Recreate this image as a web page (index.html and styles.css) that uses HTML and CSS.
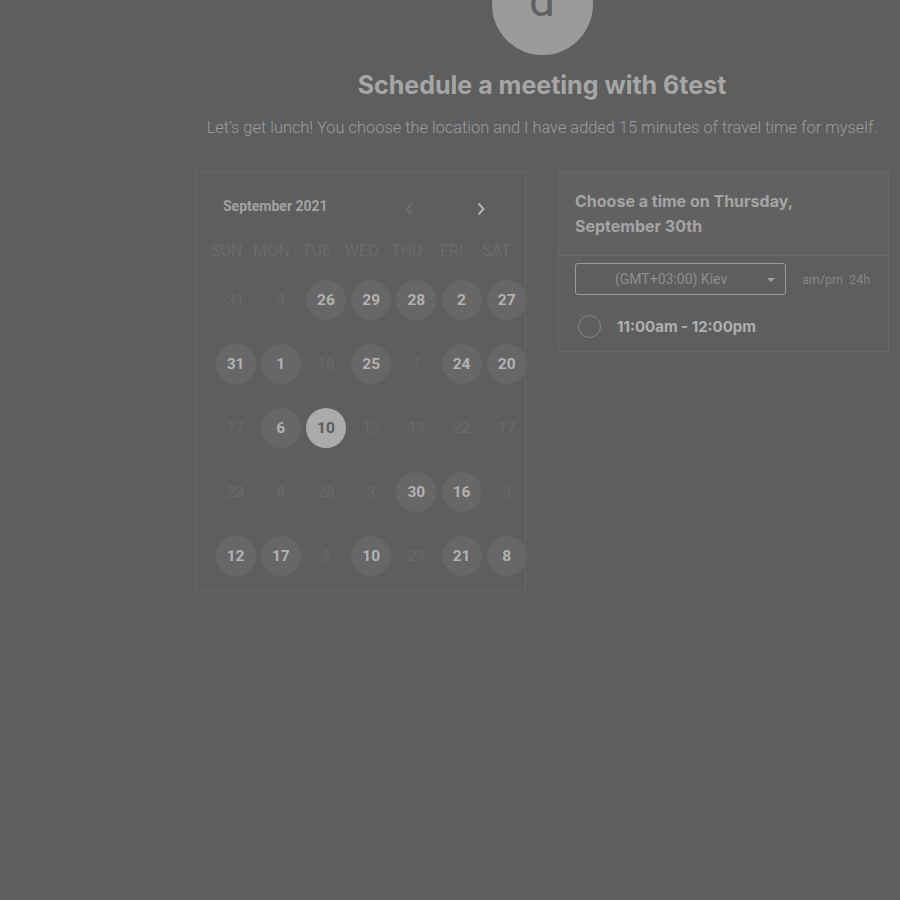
FILE: index.html
```html
<!DOCTYPE html>
<html>
<head>
<meta charset="utf-8">
<link rel="stylesheet" href="styles.css">
</head>
<body>
<div class="page">
  <div class="head">
    <div class="avatar"><span>d</span></div>
    <h1 class="title">Schedule a meeting with 6test</h1>
    <p class="desc">Let’s get lunch! You choose the location and I have added 15 minutes of travel time for myself.</p>
  </div>
  <div class="panels">
    <div class="cal">
      <div class="cal-top">
        <span class="month">September 2021</span>
        <span class="nav prev"><svg width="10" height="14" viewBox="0 0 10 14"><path d="M7.5 1.5 L2.5 7 L7.5 12.5" fill="none" stroke="currentColor" stroke-width="1.8"/></svg></span>
        <span class="nav next"><svg width="10" height="14" viewBox="0 0 10 14"><path d="M2.5 1.5 L7.5 7 L2.5 12.5" fill="none" stroke="currentColor" stroke-width="2"/></svg></span>
      </div>
      <div class="dow">
        <span>SUN</span><span>MON</span><span>TUE</span><span>WED</span><span>THU</span><span>FRI</span><span>SAT</span>
      </div>
      <div class="days">
        <span class="d off">31</span><span class="d off">3</span><span class="d on">26</span><span class="d on">29</span><span class="d on">28</span><span class="d on">2</span><span class="d on">27</span>
        <span class="d on">31</span><span class="d on">1</span><span class="d off">18</span><span class="d on">25</span><span class="d off">7</span><span class="d on">24</span><span class="d on">20</span>
        <span class="d off">17</span><span class="d on">6</span><span class="d sel">10</span><span class="d off">12</span><span class="d off">19</span><span class="d off">22</span><span class="d off">17</span>
        <span class="d off">23</span><span class="d off">8</span><span class="d off">28</span><span class="d off">3</span><span class="d on">30</span><span class="d on">16</span><span class="d off">3</span>
        <span class="d on">12</span><span class="d on">17</span><span class="d off">3</span><span class="d on">10</span><span class="d off">29</span><span class="d on">21</span><span class="d on">8</span>
      </div>
    </div>
    <div class="times">
      <div class="times-head">Choose a time on Thursday, September 30th</div>
      <div class="times-body">
        <div class="tz-row">
          <div class="tz"><span class="tz-text">(GMT+03:00) Kiev</span><span class="caret"></span></div>
          <span class="fmt">am/pm&nbsp; 24h</span>
        </div>
        <div class="slot"><span class="radio"></span><span class="slot-text">11:00am - 12:00pm</span></div>
      </div>
    </div>
  </div>
</div>
</body>
</html>
```
FILE: styles.css
```css
html, body {
  margin: 0;
  padding: 0;
  background: #5e5e5e;
  height: 100%;
  overflow: hidden;
}
body {
  font-family: Roboto, "Liberation Sans", sans-serif;
}
.page {
  width: 694px;
  margin-left: 195px;
}
.head {
  display: flex;
  flex-direction: column;
  align-items: center;
}
.avatar {
  width: 101px;
  height: 101px;
  border-radius: 50%;
  background: #9b9b9b;
  margin-top: -46px;
  display: flex;
  justify-content: center;
  align-items: flex-start;
  overflow: hidden;
}
.avatar span {
  font-family: Roboto, sans-serif;
  font-size: 46px;
  color: #616161;
  line-height: 46px;
  margin-top: 23px;
}
.title {
  margin: 15px 0 0;
  font-family: Inter, Roboto, sans-serif;
  font-weight: 700;
  font-size: 25px;
  line-height: 30px;
  color: #a6a6a6;
}
.desc {
  margin: 17px 0 0;
  font-family: Roboto, sans-serif;
  font-weight: 300;
  font-size: 16.4px;
  line-height: 22px;
  color: #9c9c9c;
  white-space: nowrap;
}
.panels {
  display: flex;
  gap: 32px;
  margin-top: 32px;
  align-items: flex-start;
}
.cal {
  width: 329px;
  height: 418px;
  border: 1px solid #686868;
}
.cal-top {
  display: flex;
  align-items: center;
  height: 36px;
  margin-top: 19px;
  padding-left: 27px;
}
.month {
  font-family: Roboto, sans-serif;
  font-weight: 700;
  font-size: 14px;
  color: #a2a2a2;
  width: 180px;
  margin-top: -7px;
}
.nav {
  display: flex;
}
.prev {
  color: #717171;
  margin-left: 1px;
}
.next {
  color: #b4b4b4;
  margin-left: 62px;
}
.dow {
  display: grid;
  grid-template-columns: repeat(7, 45px);
  margin-left: 8px;
  margin-top: 14px;
  font-size: 16px;
  color: #6b6b6b;
  text-align: center;
  line-height: 20px;
}
.days {
  display: grid;
  grid-template-columns: repeat(7, 45.2px);
  grid-auto-rows: 64px;
  margin-left: 17px;
  margin-top: 7px;
}
.d {
  display: flex;
  align-items: center;
  justify-content: center;
  font-size: 15.5px;
  width: 40px;
  height: 40px;
  border-radius: 50%;
  justify-self: center;
  align-self: center;
}
.off {
  color: #6a6a6a;
}
.on {
  background: #676767;
  color: #b2b2b2;
  font-weight: 700;
}
.sel {
  background: #ababab;
  color: #5c5c5c;
  font-weight: 700;
}
.times {
  width: 329px;
  border: 1px solid #686868;
}
.times-head {
  background: #616161;
  border-bottom: 1px solid #6a6a6a;
  padding: 17px 30px 16px 16px;
  font-family: Inter, Roboto, sans-serif;
  font-weight: 700;
  font-size: 16px;
  line-height: 25px;
  color: #a4a4a4;
}
.times-body {
  padding: 7px 16px 13px;
}
.tz-row {
  display: flex;
  align-items: center;
}
.tz {
  width: 209px;
  height: 30px;
  border: 1px solid #9a9a9a;
  border-radius: 3px;
  display: flex;
  align-items: center;
  position: relative;
}
.tz-text {
  margin-left: 39px;
  font-size: 14px;
  color: #8f8f8f;
}
.caret {
  position: absolute;
  right: 10px;
  top: 14px;
  width: 0;
  height: 0;
  border-left: 4px solid transparent;
  border-right: 4px solid transparent;
  border-top: 4px solid #a0a0a0;
}
.fmt {
  margin-left: 16px;
  font-size: 12.5px;
  color: #878787;
}
.slot {
  display: flex;
  align-items: center;
  margin-top: 20px;
}
.radio {
  width: 21px;
  height: 21px;
  border: 1.5px solid #878787;
  border-radius: 50%;
  margin-left: 3px;
}
.slot-text {
  margin-left: 16px;
  font-family: Inter, Roboto, sans-serif;
  font-weight: 700;
  font-size: 15px;
  color: #b0b0b0;
}
```
